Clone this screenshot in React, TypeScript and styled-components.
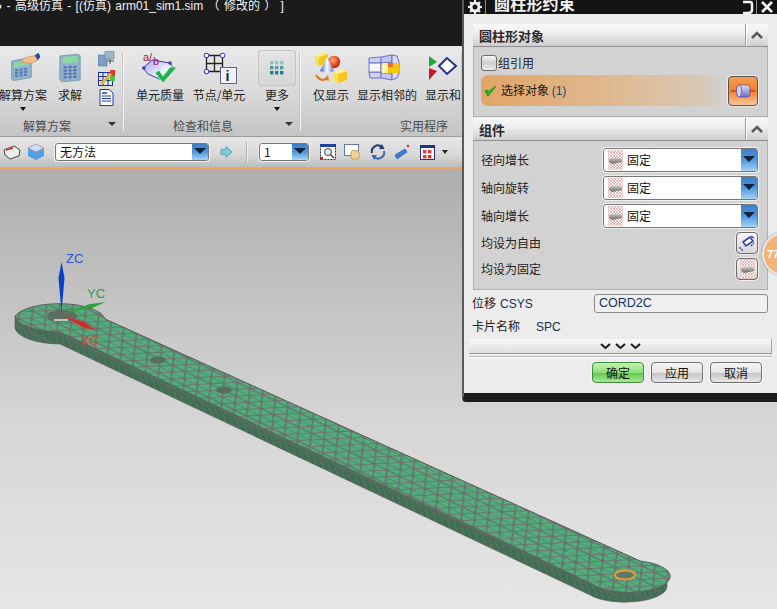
import React from "react";
import styled, { createGlobalStyle } from "styled-components";

const CJK = `"Noto Sans CJK SC", "Liberation Sans", sans-serif`;
const LATIN = `"Liberation Sans", "Noto Sans CJK SC", sans-serif`;

const Global = createGlobalStyle`
  html, body { margin: 0; padding: 0; background: #d8d8d8; }
  * { box-sizing: border-box; }
`;

const Page = styled.div`
  position: relative;
  width: 777px;
  height: 609px;
  overflow: hidden;
  display: flex;
  flex-direction: column;
  font: 12px/16px ${CJK};
  color: #222;
`;

const TitleBar = styled.div`
  height: 46px;
  flex: none;
  background: #1b1b1b;
  color: #f2f2f2;
  font: 12px/13px ${LATIN};
  white-space: pre;
  overflow: hidden;
`;

const TitleLine = styled.div`
  margin-left: -5px;
  word-spacing: 1px;
`;

const Ribbon = styled.div`
  height: 91px;
  flex: none;
  display: flex;
  background: linear-gradient(#e9e9e9, #dcdcdc 45%, #c4c4c4);
  border-bottom: 1px solid #9d9d9d;
`;

const Group = styled.div<{ $w: number }>`
  width: ${(p) => p.$w}px;
  flex: none;
  display: flex;
  flex-direction: column;
  position: relative;
  padding-top: 4px;
  &::after {
    content: "";
    position: absolute;
    right: 0;
    top: 5px;
    bottom: 5px;
    width: 1px;
    background: #f1f1f1;
    box-shadow: -1px 0 0 #c9c9c9;
  }
`;

const GroupItems = styled.div`
  height: 68px;
  display: flex;
`;

const GroupLabel = styled.div<{ $pl: number }>`
  height: 20px;
  display: flex;
  align-items: center;
  padding-left: ${(p) => p.$pl}px;
  color: #4a4a4a;
  font-size: 12px;
  position: relative;
`;

const GroupCaret = styled.span`
  position: absolute;
  right: 8px;
  top: 6px;
  border: 4px solid transparent;
  border-top: 4px solid #333;
`;

const Tool = styled.div<{ $w: number; $ml?: number }>`
  width: ${(p) => p.$w}px;
  margin-left: ${(p) => p.$ml ?? 0}px;
  flex: none;
  display: flex;
  flex-direction: column;
  align-items: center;
  white-space: nowrap;
`;

const ToolIconBox = styled.div<{ $outlined?: boolean }>`
  width: 38px;
  height: 36px;
  display: flex;
  align-items: center;
  justify-content: center;
  border-radius: 3px;
  margin-bottom: 1px;
  ${(p) =>
    p.$outlined
      ? `background: linear-gradient(#e4e4e4,#d6d6d6); box-shadow: inset 0 0 0 1px #c4c4c4;`
      : ""}
`;

const ToolText = styled.div`
  height: 16px;
  line-height: 16px;
  font-size: 12px;
  color: #1d1d1d;
  display: flex;
  justify-content: center;
  width: 0;
`;

const MiniCaret = styled.span`
  margin-top: 4px;
  border: 3px solid transparent;
  border-top: 4px solid #111;
`;

const SmallStack = styled.div`
  width: 24px;
  flex: none;
  display: flex;
  flex-direction: column;
  align-items: center;
  gap: 3px;
  margin-top: 1px;
`;

const Toolbar = styled.div`
  height: 30px;
  flex: none;
  display: flex;
  align-items: center;
  background: linear-gradient(#e6e6e6, #d8d8d8 60%, #bdbdbd);
`;

const Slot = styled.div<{ $w: number }>`
  width: ${(p) => p.$w}px;
  flex: none;
  display: flex;
  align-items: center;
  justify-content: center;
`;

const Divider = styled.div`
  width: 1px;
  height: 20px;
  margin: 0 12px 0 0;
  background: #b2b2b2;
  box-shadow: 1px 0 0 #eee;
  flex: none;
`;

const Combo = styled.div<{ $w: number; $h: number }>`
  width: ${(p) => p.$w}px;
  height: ${(p) => p.$h}px;
  flex: none;
  display: flex;
  background: #fff;
  border: 1px solid #777;
  border-radius: 3px;
  box-shadow: 0 0 0 1px #eee;
  overflow: hidden;
`;

const ComboText = styled.div`
  flex: 1;
  display: flex;
  align-items: center;
  gap: 4px;
  padding-left: 4px;
  font-size: 12px;
  color: #111;
  min-width: 0;
`;

const ComboArrow = styled.div`
  width: 16px;
  flex: none;
  background: linear-gradient(#3f7fc4, #4f97dd 50%, #a5d4f6);
  display: flex;
  align-items: center;
  justify-content: center;
  &::after {
    content: "";
    border-style: solid;
    border-width: 6px 6px 0;
    border-color: #15233a transparent transparent;
    margin-top: -2px;
  }
`;

const OrangeLine = styled.div`
  height: 2px;
  flex: none;
  background: #f3a45e;
`;

const Viewport = styled.div`
  flex: 1;
  position: relative;
  background: linear-gradient(#adadad, #c2c2c2 28%, #d6d6d6 58%, #e6e6e6);
`;

const ModelSvg = styled.svg`
  display: block;
  width: 777px;
  height: 440px;
`;

const Dialog = styled.aside`
  position: absolute;
  left: 462px;
  top: 0;
  width: 315px;
  height: 402px;
  background: #ececec;
  border-left: 2px solid #5a5a5a;
  border-bottom: 9px solid #1d1d1d;
  border-bottom-left-radius: 4px;
  display: flex;
  flex-direction: column;
`;

const DialogTitle = styled.div`
  height: 14px;
  flex: none;
  background: #141414;
  display: flex;
  color: #f4f4f4;
  overflow: hidden;
`;

const TitleCell = styled.div<{ $w: number }>`
  width: ${(p) => p.$w}px;
  height: 14px;
  flex: none;
  display: flex;
  align-items: center;
  justify-content: center;
  border-right: 1px solid #8a8a8a;
`;

const TitleText = styled.div`
  flex: 1;
  font-size: 16px;
  font-weight: 700;
  line-height: 16px;
  height: 16px;
  padding-left: 8px;
  margin-top: -5px;
  letter-spacing: 0.2px;
`;

const DialogBody = styled.div`
  flex: 1;
  padding: 10px 9px 0 9px;
  display: flex;
  flex-direction: column;
`;

const PanelHeader = styled.div`
  height: 23px;
  flex: none;
  display: flex;
  align-items: center;
  justify-content: space-between;
  background: linear-gradient(#f8f8f8, #eeeeee 40%, #cfcfcf);
  border-bottom: 1px solid #8f8f8f;
  padding-left: 6px;
  font-size: 13px;
  font-weight: 700;
  color: #2a2a2a;
`;

const HeaderText = styled.span`
  padding-top: 2px;
`;

const Collapse = styled.div`
  width: 23px;
  height: 22px;
  display: flex;
  align-items: center;
  justify-content: center;
  border-left: 1px solid #9a9a9a;
  box-shadow: inset 1px 0 0 #fff;
`;

const PanelBody = styled.div<{ $h: number }>`
  height: ${(p) => p.$h}px;
  flex: none;
  background: #d2d2d2;
  border: 1px solid #b0b0b0;
  border-top: 0;
  padding: 0 9px 0 7px;
  margin-bottom: 1px;
  display: flex;
  flex-direction: column;
`;

const CheckRow = styled.div`
  height: 16px;
  margin-top: 8px;
  display: flex;
  align-items: center;
  gap: 1px;
`;

const CheckBoxMark = styled.div`
  width: 16px;
  height: 16px;
  border: 1px solid #6c6c6c;
  border-radius: 3px;
  background: linear-gradient(#f6f6f6, #cfcfcf 50%, #efefef);
`;

const SelectionRow = styled.div`
  margin-top: 4px;
  height: 31px;
  display: flex;
  justify-content: space-between;
  align-items: center;
  border-radius: 7px;
  background: linear-gradient(90deg, #e2a567, #dfba93 50%, #d8c8b8 80%, #d2d2d2 88%);
`;

const SelectionLabel = styled.div`
  display: flex;
  align-items: center;
  gap: 4px;
  padding-left: 3px;
  color: #1a1a1a;
`;

const Count = styled.span`
  color: #1c4a6e;
  font-family: ${LATIN};
`;

const OrangeButton = styled.div`
  width: 30px;
  height: 30px;
  border-radius: 4px;
  border: 1px solid #555;
  box-shadow: 0 0 0 1px #eee;
  background: linear-gradient(#f4a055, #f07f2c 50%, #fbc79a);
  display: flex;
  align-items: center;
  justify-content: center;
`;

const CompRows = styled.div`
  display: flex;
  flex-direction: column;
  padding-top: 7px;
  gap: 4px;
`;

const CompRow = styled.div<{ $h: number }>`
  height: ${(p) => p.$h}px;
  display: flex;
  align-items: center;
  justify-content: space-between;
`;

const SquareButton = styled.div`
  width: 22px;
  height: 22px;
  border: 1px solid #6d6d6d;
  border-radius: 4px;
  box-shadow: 0 0 0 1px #eee;
  background: linear-gradient(#f6f6f6, #d6d6d6);
  display: flex;
  align-items: center;
  justify-content: center;
`;

const FieldRow = styled.div`
  height: 20px;
  margin-top: 2px;
  display: flex;
  align-items: center;
  justify-content: space-between;
`;

const FieldLabel = styled.div`
  font-size: 12px;
  margin-left: -1px;
  color: #222;
`;

const Latin = styled.span<{ $gap?: number }>`
  font-family: ${LATIN};
  color: #15305c;
  margin-left: ${(p) => p.$gap ?? 0}px;
`;

const FieldInput = styled.div`
  width: 174px;
  height: 19px;
  background: #f0f0f0;
  border: 1px solid #8a8a8a;
  border-radius: 3px;
  padding-left: 4px;
  font: 12.5px/17px ${LATIN};
  color: #15305c;
`;

const CardRow = styled.div`
  height: 16px;
  margin: 5px 0;
`;

const ExpandBar = styled.div`
  height: 15px;
  margin: 0 -4px 0 -4px;
  flex: none;
  background: linear-gradient(#f9f9f9, #dedede);
  border-bottom: 1px solid #999;
  border-right: 1px solid #aaa;
  display: flex;
  justify-content: center;
  align-items: center;
  gap: 4px;
`;

const Rule = styled.div`
  height: 1px;
  margin: 2px -4px 0;
  background: #b5b5b5;
  box-shadow: 0 1px 0 #fff;
`;

const Actions = styled.div`
  display: flex;
  justify-content: flex-end;
  gap: 7px;
  padding: 5px 6px 0 0;
`;

const ActionButton = styled.div<{ $primary?: boolean }>`
  width: 52px;
  height: 21px;
  border: 1px solid ${(p) => (p.$primary ? "#3b8f3b" : "#6f6f6f")};
  border-radius: 4px;
  box-shadow: 0 0 0 1px #f6f6f6;
  display: flex;
  align-items: center;
  justify-content: center;
  font-size: 12px;
  color: #111;
  background: ${(p) =>
    p.$primary
      ? "linear-gradient(#c9f1b4, #8be07a 50%, #5fc956 55%, #a9e98f)"
      : "linear-gradient(#f6f6f6, #e4e4e4 50%, #c6c6c6 55%, #e8e8e8)"};
`;

const Badge = styled.div`
  position: absolute;
  left: 762px;
  top: 232px;
  width: 44px;
  height: 44px;
  border-radius: 50%;
  background: #f2b27a;
  border: 2px solid #e9e9e9;
  box-shadow: 0 0 2px #888;
  color: #fff;
  font: 700 11px/40px ${LATIN};
  padding-left: 3px;
`;

/* ---------- drawings ---------- */

const Calculator = () => (
  <svg width="24" height="32" viewBox="0 0 26 32">
    <path d="M2 3 L22 1 L24 3 V29 L4 31 L2 29Z" fill="#8fb3c9" stroke="#7d97a8" />
    <path d="M5 4 L21 3 V10 L5 11Z" fill="#8ed8a8" />
    {[0, 1, 2, 3].map((r) =>
      [0, 1, 2].map((c) => (
        <rect key={`${r}${c}`} x={6 + c * 5.2} y={14 + r * 3.6 - c * 0.2} width="3.6" height="2.4" fill="#5a74b8" />
      ))
    )}
  </svg>
);

const SolutionIcon = () => (
  <svg width="38" height="36" viewBox="0 0 38 36">
    <g transform="translate(6 2) scale(.82)">
      <path d="M2 11 L24 7 L26 9 V31 L4 35 L2 33Z" fill="#8fb3c9" stroke="#7d97a8" />
      <path d="M5 13 L22 10 V16 L5 19Z" fill="#8ed8a8" />
      {[0, 1, 2].map((r) =>
        [0, 1, 2].map((c) => (
          <rect key={`${r}${c}`} x={6 + c * 5.5} y={21 + r * 3.6 - c * 0.8} width="3.8" height="2.4" fill="#5a74b8" />
        ))
      )}
      <path d="M16 8 L26 5 L31 5 L34 10 L26 14 L20 13 L14 13Z" fill="#f2c28e" stroke="#c58a55" strokeWidth=".7" />
      <path d="M30 4 L35 1 L37 6 L34 10Z" fill="#2d4f9e" />
    </g>
  </svg>
);

const SmallNet = () => (
  <svg width="17" height="16" viewBox="0 0 17 16">
    <rect x="0" y="4" width="9" height="11" fill="#7d9fc4" stroke="#5a7a9a" strokeWidth=".6" />
    <rect x="7" y="0" width="9" height="8" fill="#9db4c8" stroke="#66809a" strokeWidth=".6" />
    <path d="M9 10h7M12 8v5" stroke="#555" />
  </svg>
);

const SmallChart = () => (
  <svg width="17" height="16" viewBox="0 0 17 16">
    <rect x="0.5" y="2.5" width="14" height="13" fill="#dfe7fb" stroke="#1d2f9a" />
    <path d="M0 6.5h15M0 10.5h15M5 3v12M10 3v12" stroke="#1d2f9a" />
    <path d="M12 0h5v6h-5z" fill="#e63b2a" />
    <path d="M12 6h5v5h-5z" fill="#49c24a" />
    <path d="M3 14 L13 4" stroke="#e8b23a" strokeWidth="3" />
  </svg>
);

const SmallDoc = () => (
  <svg width="15" height="17" viewBox="0 0 15 17">
    <path d="M1 .5 H10 L14 4 V16.5 H1Z" fill="#fff" stroke="#1f3aa8" />
    <path d="M3 7h9M3 9.5h9M3 12h9" stroke="#1f3aa8" />
    <path d="M3 3h5v2h-5z" fill="#4f6fd0" />
  </svg>
);

const QualityIcon = () => (
  <svg width="36" height="33" viewBox="0 0 36 33">
    <defs>
      <linearGradient id="qual" x1="0" y1="0" x2="1" y2="1">
        <stop offset="0" stopColor="#9ea4ee" />
        <stop offset=".6" stopColor="#eef0ff" />
        <stop offset="1" stopColor="#c8ccf4" />
      </linearGradient>
    </defs>
    <path d="M1 16 L10 8 L28 11 L32 17 L22 29 L6 22Z" fill="url(#qual)" stroke="#3a3fa8" />
    <circle cx="1.8" cy="16" r="1.8" fill="#3a3fa8" />
    <circle cx="28" cy="11" r="1.8" fill="#3a3fa8" />
    <path d="M13 21 L21 31 L35 15 L28 15 L21 24 L17 18Z" fill="#22b34a" stroke="#fff" strokeWidth=".6" />
    <text x="1" y="9" fontFamily={LATIN} fontSize="11" fill="#b3162b">a/</text>
    <text x="11" y="13" fontFamily={LATIN} fontSize="11" fill="#b3162b">b</text>
  </svg>
);

const NodeIcon = () => (
  <svg width="38" height="33" viewBox="0 0 38 33">
    <path d="M6.5 3.5 H22.5 V19.5 H6.5Z M14.5 3.5 V19.5 M6.5 11.5 H22.5" fill="none" stroke="#222" strokeWidth="1.3" />
    {[[6.5, 3.5], [22.5, 3.5], [6.5, 19.5], [22.5, 19.5]].map(([x, y]) => (
      <circle key={`${x}${y}`} cx={x} cy={y} r="2.3" fill="#fff" stroke="#2b2b9a" />
    ))}
    <rect x="20.5" y="15.5" width="16" height="16" fill="#eef0ff" stroke="#667" />
    <text x="25.5" y="29" fontFamily={LATIN} fontSize="14" fontWeight="700" fill="#123">i</text>
  </svg>
);

const DotsIcon = () => (
  <svg width="14" height="14" viewBox="0 0 14 14">
    {[0, 1, 2].map((r) =>
      [0, 1, 2].map((c) => (
        <rect key={`${r}${c}`} x={c * 5} y={r * 5} width="3.4" height="3.4" fill={r === 0 ? "#8fc1c9" : r === 1 ? "#4f9aa6" : "#1f7d8c"} />
      ))
    )}
  </svg>
);

const YellowCube = ({ x, y }: { x: number; y: number }) => (
  <g transform={`translate(${x} ${y})`}>
    <path d="M0 3 L9 0 L13 2 L4 5Z" fill="#fff08a" />
    <path d="M0 3 L4 5 V14 L0 12Z" fill="#f2e35a" />
    <path d="M4 5 L13 2 V11 L4 14Z" fill="#f6c61c" />
  </g>
);

const ShowOnlyIcon = () => (
  <svg width="34" height="34" viewBox="0 0 34 34">
    <defs>
      <linearGradient id="cone" x1="0" y1="0" x2="1" y2="0">
        <stop offset="0" stopColor="#3a4fc4" />
        <stop offset=".5" stopColor="#ffffff" />
        <stop offset="1" stopColor="#5a6fd8" />
      </linearGradient>
      <radialGradient id="ball" cx=".4" cy=".35" r=".7">
        <stop offset="0" stopColor="#ffb08a" />
        <stop offset=".6" stopColor="#e8481c" />
        <stop offset="1" stopColor="#b02a0c" />
      </radialGradient>
    </defs>
    <YellowCube x={1} y={1} />
    <YellowCube x={20} y={18} />
    <circle cx="20" cy="11" r="6.2" fill="url(#ball)" />
    <path d="M13 6 L20 20 Q13 23 6 20Z" fill="url(#cone)" />
    <path d="M2 24 Q7 32 14 27" fill="none" stroke="#e8741c" strokeWidth="2" />
    <path d="M14 24 L15 30 L10 28Z" fill="#e8741c" />
  </svg>
);

const NeighborIcon = () => (
  <svg width="38" height="28" viewBox="0 0 38 28">
    <path d="M1 4 L13 3 V9 L1 9Z M1 18 L13 18 V24 L2 24Z" fill="#cfd3ea" stroke="#6a6fd0" />
    <path d="M1 9 H13 V18 H1Z" fill="#f6f6fc" stroke="#6a6fd0" />
    <path d="M13 3 L24 1 V8 L13 9Z M13 18 L24 19 V26 L13 24Z" fill="#c4c8f0" stroke="#6a6fd0" />
    <path d="M13 9 H24 V19 H13Z" fill="#f6f6fc" stroke="#6a6fd0" />
    <path d="M24 1 L29 2 L31 8 V19 L29 24 L24 26Z" fill="#dcdcf6" stroke="#6a6fd0" />
    <path d="M14 9 H31 V19 H14Z" fill="#f5c800" />
    <path d="M14 9 H20 V19 H14Z" fill="#fff2a0" />
    <path d="M20 9 H25 V13 H20Z" fill="#ee6a2a" />
  </svg>
);

const ShowAndIcon = () => (
  <svg width="30" height="26" viewBox="0 0 30 26">
    <path d="M1 1 L9 7 L1 12Z" fill="#22a83a" />
    <path d="M1 25 L9 16 L1 13Z" fill="#c8142c" />
    <path d="M11 11 L19 3 L28 11 L19 19Z" fill="#fff" stroke="#26308f" strokeWidth="2" />
  </svg>
);

const SolidIcon = () => (
  <svg width="18" height="16" viewBox="0 0 18 16">
    <path d="M1 6 L11 2 L17 6 L16 12 L7 15 L2 11Z" fill="#eee" stroke="#444" />
    <path d="M3 6 L10 4" stroke="#d33" strokeWidth="1.5" />
  </svg>
);

const CubeIcon = () => (
  <svg width="18" height="18" viewBox="0 0 18 18">
    <path d="M1 5 L9 1 L17 5 V13 L9 17 L1 13Z" fill="#4aa3ea" />
    <path d="M1 5 L9 9 L17 5 L9 1Z" fill="#bfe3fb" stroke="#e66" strokeWidth=".6" />
    <path d="M9 9 V17" stroke="#e66" strokeWidth=".6" />
  </svg>
);

const ArrowIcon = () => (
  <svg width="13" height="12" viewBox="0 0 13 12">
    <path d="M1 3.5 H6 V.5 L12 6 L6 11.5 V8.5 H1Z" fill="#7cd0d8" stroke="#66a0b8" />
  </svg>
);

const ZoomBox = () => (
  <svg width="16" height="16" viewBox="0 0 16 16">
    <rect x=".5" y=".5" width="15" height="15" fill="#fff" stroke="#1c2f8a" strokeDasharray="2 1" />
    <rect x="0" y="0" width="16" height="3" fill="#1c3fa0" />
    <circle cx="8" cy="8" r="3.5" fill="#dfe8f5" stroke="#444" />
    <path d="M10.5 10.5 L14 14" stroke="#444" strokeWidth="1.5" />
    <rect x="0" y="13" width="3" height="3" fill="#c22" />
  </svg>
);

const PanIcon = () => (
  <svg width="17" height="16" viewBox="0 0 17 16">
    <rect x=".5" y=".5" width="14" height="11" fill="#fff" stroke="#6476a8" />
    <path d="M7 14 L7 8 L9 6 L14 7 L16 11 L14 15 L9 15Z" fill="#f3cf95" stroke="#a87a3a" strokeWidth=".6" />
  </svg>
);

const RotateIcon = () => (
  <svg width="16" height="16" viewBox="0 0 16 16">
    <path d="M2 9 A6 6 0 0 1 12 3.2" fill="none" stroke="#1c3f7a" strokeWidth="2" />
    <path d="M14 7 A6 6 0 0 1 4 12.8" fill="none" stroke="#3a6cb0" strokeWidth="2" />
    <path d="M12 0 L14.5 5 L9 5Z" fill="#1c3f7a" />
    <path d="M4 16 L1.5 11 L7 11Z" fill="#3a6cb0" />
  </svg>
);

const WandIcon = () => (
  <svg width="16" height="16" viewBox="0 0 16 16">
    <path d="M1 11 L11 5 L13 8 L3 15Z" fill="#3f7fd6" stroke="#1f4f9a" strokeWidth=".6" />
    <circle cx="14" cy="2" r="1.2" fill="#d22" />
  </svg>
);

const ViewIcon = () => (
  <svg width="15" height="15" viewBox="0 0 15 15">
    <rect x=".5" y=".5" width="14" height="14" fill="#fff" stroke="#23308f" />
    <rect x="0" y="0" width="15" height="3" fill="#23308f" />
    {[[3, 5], [8, 5], [3, 10], [8, 10]].map(([x, y]) => (
      <rect key={`${x}${y}`} x={x} y={y} width="3.4" height="3.4" fill="#e33" />
    ))}
  </svg>
);

const SmallCaret = styled.span`
  border: 3px solid transparent;
  border-top: 4px solid #222;
  margin-top: 3px;
`;

const Gear = () => (
  <svg width="14" height="14" viewBox="0 0 14 14">
    <circle cx="7" cy="7" r="4" fill="none" stroke="#f2f2f2" strokeWidth="3" />
    <path d="M7 0v3M7 11v3M0 7h3M11 7h3M2 2l2 2M10 10l2 2M12 2l-2 2M2 12l2-2" stroke="#f2f2f2" strokeWidth="2" />
  </svg>
);

const Chevron = () => (
  <svg width="14" height="10" viewBox="0 0 14 10">
    <path d="M2 8 L7 3 L12 8" fill="none" stroke="#5c5c5c" strokeWidth="2.6" />
  </svg>
);

const ChevronDown = () => (
  <svg width="11" height="7" viewBox="0 0 11 7">
    <path d="M1 1 L5.5 5 L10 1" fill="none" stroke="#1a1a1a" strokeWidth="2" />
  </svg>
);

const CylinderIcon = () => (
  <svg width="24" height="16" viewBox="0 0 24 16">
    <defs>
      <linearGradient id="cy" x1="0" y1="0" x2="0" y2="1">
        <stop offset="0" stopColor="#dfe0fa" />
        <stop offset="1" stopColor="#6a6cc4" />
      </linearGradient>
    </defs>
    <rect x="6" y="2" width="13" height="12" rx="3" fill="url(#cy)" stroke="#4a4ca0" strokeWidth=".7" />
    <ellipse cx="8" cy="8" rx="2.5" ry="6" fill="#cfd0f5" stroke="#4a4ca0" strokeWidth=".7" />
    <path d="M0 8 H5 M19 8 H24" stroke="#c8102e" />
  </svg>
);

const FixedIcon = () => (
  <svg width="15" height="20" viewBox="0 0 15 20">
    <defs>
      <pattern id="hatch" width="3" height="3" patternUnits="userSpaceOnUse">
        <path d="M0 3 L3 0 M0 0 L3 3" stroke="#e09a9a" strokeWidth=".7" />
      </pattern>
      <linearGradient id="bar" x1="0" y1="0" x2="0" y2="1">
        <stop offset="0" stopColor="#d8d8d8" />
        <stop offset="1" stopColor="#666" />
      </linearGradient>
    </defs>
    <rect x=".5" y=".5" width="14" height="19" fill="#fff" />
    <rect x=".5" y=".5" width="14" height="19" fill="url(#hatch)" stroke="#e8b5b5" strokeWidth=".5" />
    <path d="M1 9 L11 7 L14 9 V12 L4 14 L1 12Z" fill="url(#bar)" />
  </svg>
);

const FreeIcon = () => (
  <svg width="18" height="18" viewBox="0 0 18 18">
    <path d="M5 8 L12 3 L15 7 L8 12Z" fill="#fff" stroke="#2f3fb0" strokeWidth="1.6" />
    <path d="M2 13 A3 3 0 0 0 5 16 M13 12 L16 9" fill="none" stroke="#2f3fb0" strokeWidth="1.4" strokeDasharray="2 1" />
    <path d="M13 2 L16 4" stroke="#2f3fb0" strokeWidth="1.4" />
  </svg>
);

const CheckIcon = () => (
  <svg width="13" height="12" viewBox="0 0 13 12">
    <path d="M1 6 L4 11 L12 1 L5 6.5 L3.5 5Z" fill="#1fb81f" stroke="#12a012" />
  </svg>
);

const Model = () => {
  const top = "M15 316 A46 17 0 0 1 105 319 L640 561 A42 16 0 1 1 590 583 L60 332 A46 17 0 0 1 15 316Z";
  const side = "M15 316 V328 A46 17 0 0 0 60 344 L590 595 A42 16 0 0 0 667 587 V575 L640 561 L105 319Z";
  return (
    <ModelSvg viewBox="0 169 777 440">
      <defs>
        <pattern id="tri" width="14" height="16" patternUnits="userSpaceOnUse" patternTransform="matrix(0.9 0.44 -0.88 0.47 0 0)">
          <rect width="14" height="16" fill="#4fae7c" />
          <path d="M0 0 H14 M0 8 H14 M0 0 L7 8 L14 0 M0 16 L7 8 L14 16" stroke="#6b6f6c" strokeWidth="1.4" fill="none" />
        </pattern>
        <pattern id="sidemesh" width="7" height="12" patternUnits="userSpaceOnUse" patternTransform="matrix(1 0.47 0 1 0 0)">
          <rect width="7" height="12" fill="#3d6f53" />
          <path d="M0 0 V12 M0 0 L7 12 M0 6 H7" stroke="#666d68" strokeWidth="1" fill="none" />
        </pattern>
      </defs>
      <path d={side} fill="url(#sidemesh)" stroke="#555" strokeWidth=".6" />
      <path d={top} fill="url(#tri)" stroke="#5f5f5f" strokeWidth="1" />
      <ellipse cx="62" cy="316" rx="15" ry="6" fill="#5c6d63" />
      <path d="M54 320 H68" stroke="#eee" strokeWidth="1.4" />
      <ellipse cx="158" cy="360" rx="8" ry="3.6" fill="#5a6d60" />
      <ellipse cx="224" cy="390" rx="8" ry="3.6" fill="#5a6d60" />
      <ellipse cx="625" cy="575" rx="10" ry="4.5" fill="#5c7a68" stroke="#ef9a3c" strokeWidth="2" />
      <path d="M61.5 312 L58.5 278 L61.5 262 L64.5 278Z" fill="#0a3fc8" />
      <path d="M64 313 L90 304 L106 302 L92 308Z" fill="#2fa33a" />
      <path d="M64 316 L84 322 L97 331 L82 327Z" fill="#d62a2a" />
      <text x="66" y="263" fontFamily={LATIN} fontSize="13" fill="#2d55e0">ZC</text>
      <text x="87" y="298" fontFamily={LATIN} fontSize="13" fill="#3a9a48">YC</text>
      <text x="81" y="345" fontFamily={LATIN} fontSize="13" fill="#d84a3a">XC</text>
    </ModelSvg>
  );
};

const FixedRow = ({ label }: { label: string }) => (
  <CompRow $h={24}>
    <span>{label}</span>
    <Combo $w={155} $h={24}>
      <ComboText>
        <FixedIcon />
        <span>固定</span>
      </ComboText>
      <ComboArrow />
    </Combo>
  </CompRow>
);

export default function App() {
  return (
    <Page>
      <Global />
      <TitleBar>
        <TitleLine>{"● - 高级仿真 - [(仿真) arm01_sim1.sim （ 修改的 ） ]"}</TitleLine>
      </TitleBar>
      <Ribbon>
        <Group $w={124}>
          <GroupItems>
            <Tool $w={46}>
              <ToolIconBox><SolutionIcon /></ToolIconBox>
              <ToolText>解算方案</ToolText>
              <MiniCaret />
            </Tool>
            <Tool $w={48}>
              <ToolIconBox><Calculator /></ToolIconBox>
              <ToolText>求解</ToolText>
            </Tool>
            <SmallStack>
              <SmallNet />
              <SmallChart />
              <SmallDoc />
            </SmallStack>
          </GroupItems>
          <GroupLabel $pl={23}>解算方案<GroupCaret /></GroupLabel>
        </Group>
        <Group $w={177}>
          <GroupItems>
            <Tool $w={72}>
              <ToolIconBox><QualityIcon /></ToolIconBox>
              <ToolText>单元质量</ToolText>
            </Tool>
            <Tool $w={46}>
              <ToolIconBox><NodeIcon /></ToolIconBox>
              <ToolText>节点/单元</ToolText>
            </Tool>
            <Tool $w={40} $ml={15}>
              <ToolIconBox $outlined><DotsIcon /></ToolIconBox>
              <ToolText>更多</ToolText>
              <MiniCaret />
            </Tool>
          </GroupItems>
          <GroupLabel $pl={49}>检查和信息<GroupCaret /></GroupLabel>
        </Group>
        <Group $w={162}>
          <GroupItems>
            <Tool $w={60}>
              <ToolIconBox><ShowOnlyIcon /></ToolIconBox>
              <ToolText>仅显示</ToolText>
            </Tool>
            <Tool $w={52}>
              <ToolIconBox><NeighborIcon /></ToolIconBox>
              <ToolText>显示相邻的</ToolText>
            </Tool>
            <Tool $w={60}>
              <ToolIconBox><ShowAndIcon /></ToolIconBox>
              <ToolText>显示和</ToolText>
            </Tool>
          </GroupItems>
          <GroupLabel $pl={99}>实用程序</GroupLabel>
        </Group>
      </Ribbon>
      <Toolbar>
        <Slot $w={24}><SolidIcon /></Slot>
        <Slot $w={24}><CubeIcon /></Slot>
        <Slot $w={7} />
        <Combo $w={154} $h={18}>
          <ComboText>无方法</ComboText>
          <ComboArrow />
        </Combo>
        <Slot $w={35}><ArrowIcon /></Slot>
        <Slot $w={2} />
        <Divider />
        <Combo $w={50} $h={18}>
          <ComboText>1</ComboText>
          <ComboArrow />
        </Combo>
        <Slot $w={7} />
        <Slot $w={24}><ZoomBox /></Slot>
        <Slot $w={25}><PanIcon /></Slot>
        <Slot $w={25}><RotateIcon /></Slot>
        <Slot $w={24}><WandIcon /></Slot>
        <Slot $w={26}><ViewIcon /></Slot>
        <Slot $w={10}><SmallCaret /></Slot>
      </Toolbar>
      <OrangeLine />
      <Viewport>
        <Model />
      </Viewport>

      <Dialog>
        <DialogTitle>
          <TitleCell $w={22}><Gear /></TitleCell>
          <TitleText>圆柱形约束</TitleText>
          <TitleCell $w={20}>
            <svg width="14" height="14" viewBox="0 0 14 14">
              <path d="M3 2 H10 Q12 2 12 4 V10 Q12 13 8 13 H3" fill="none" stroke="#f4f4f4" strokeWidth="2.4" />
            </svg>
          </TitleCell>
          <Slot $w={20}>
            <svg width="12" height="12" viewBox="0 0 12 12">
              <path d="M1 1 L11 11 M11 1 L1 11" stroke="#f4f4f4" strokeWidth="2.6" />
            </svg>
          </Slot>
        </DialogTitle>
        <DialogBody>
          <PanelHeader><HeaderText>圆柱形对象</HeaderText><Collapse><Chevron /></Collapse></PanelHeader>
          <PanelBody $h={70}>
            <CheckRow><CheckBoxMark />组引用</CheckRow>
            <SelectionRow>
              <SelectionLabel>
                <CheckIcon />
                <span>选择对象 <Count>(1)</Count></span>
              </SelectionLabel>
              <OrangeButton><CylinderIcon /></OrangeButton>
            </SelectionRow>
          </PanelBody>
          <PanelHeader><HeaderText>组件</HeaderText><Collapse><Chevron /></Collapse></PanelHeader>
          <PanelBody $h={149}>
            <CompRows>
              <FixedRow label="径向增长" />
              <FixedRow label="轴向旋转" />
              <FixedRow label="轴向增长" />
              <CompRow $h={22}>
                <span>均设为自由</span>
                <SquareButton><FreeIcon /></SquareButton>
              </CompRow>
              <CompRow $h={22}>
                <span>均设为固定</span>
                <SquareButton><FixedIcon /></SquareButton>
              </CompRow>
            </CompRows>
          </PanelBody>
          <FieldRow>
            <FieldLabel>位移<Latin $gap={4}>CSYS</Latin></FieldLabel>
            <FieldInput>CORD2C</FieldInput>
          </FieldRow>
          <CardRow>
            <FieldLabel>卡片名称<Latin $gap={16}>SPC</Latin></FieldLabel>
          </CardRow>
          <ExpandBar><ChevronDown /><ChevronDown /><ChevronDown /></ExpandBar>
          <Rule />
          <Actions>
            <ActionButton $primary>确定</ActionButton>
            <ActionButton>应用</ActionButton>
            <ActionButton>取消</ActionButton>
          </Actions>
        </DialogBody>
      </Dialog>
      <Badge>77</Badge>
    </Page>
  );
}
